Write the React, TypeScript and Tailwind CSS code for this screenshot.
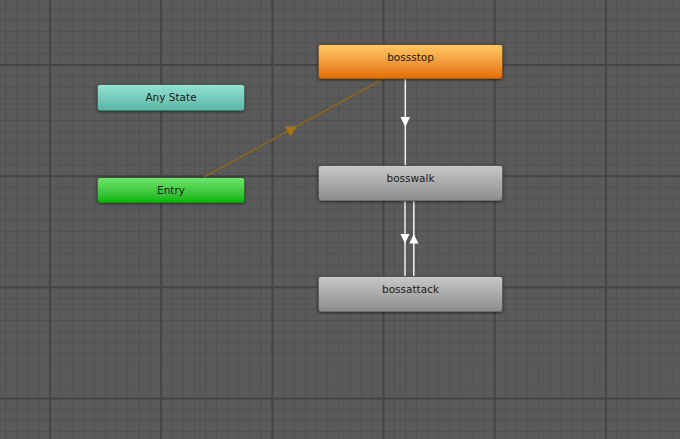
import React from "react";

type NodeProps = {
  label: string;
  left: number;
  top: number;
  width: number;
  height: number;
  cls: string;
};

function StateNode({ label, cls, pos }: { label: string; cls: string; pos: string }) {
  return (
    <div
      className={`absolute rounded-[3px] border border-[#2e2e2e]/60 shadow-[0_1px_3px_rgba(0,0,0,0.55)] ${cls} ${pos}`}
    >
      <div className="flex h-[25px] items-center justify-center text-[10.5px] text-[#202020] [font-family:'DejaVu_Sans',sans-serif]">
        {label}
      </div>
    </div>
  );
}

export default function App() {
  return (
    <div className="relative h-[439px] w-[680px] overflow-hidden bg-[#5a5a5a] bg-[linear-gradient(to_right,#454545_2px,transparent_2px),linear-gradient(to_bottom,#454545_2px,transparent_2px),linear-gradient(to_right,#515151_1px,transparent_1px),linear-gradient(to_bottom,#515151_1px,transparent_1px)] [background-size:111.2px_111.2px,111.2px_111.2px,11.12px_11.12px,11.12px_11.12px] [background-position:49px_64px,49px_64px,49.5px_64.5px,49.5px_64.5px]">
      <svg className="pointer-events-none absolute left-0 top-0" width="680" height="439">
        <line x1="204" y1="177" x2="383" y2="79" stroke="#8a6620" strokeWidth="1.5" />
        <polygon points="5.5,0 -5,-5.5 -5,5.5" fill="#a8740f" transform="translate(292 129) rotate(-28.7)" />
        <line x1="405.3" y1="79" x2="405.3" y2="166" stroke="#f2f2f2" strokeWidth="1.5" />
        <polygon points="400.5,117 410,117 405.3,127" fill="#ffffff" />
        <line x1="405" y1="201" x2="405" y2="277" stroke="#f2f2f2" strokeWidth="1.5" />
        <polygon points="400.5,234 409.5,234 405,243.5" fill="#ffffff" />
        <line x1="413.8" y1="201" x2="413.8" y2="277" stroke="#f2f2f2" strokeWidth="1.5" />
        <polygon points="409.3,243.5 418.5,243.5 413.8,234" fill="#ffffff" />
      </svg>

      <StateNode
        label="bossstop"
        pos="left-[318px] top-[44px] h-[35px] w-[185px]"
        cls="bg-linear-to-b from-[#ffc862] to-[#e56e00]"
      />
      <StateNode
        label="Any State"
        pos="left-[97px] top-[84px] h-[27px] w-[148px]"
        cls="bg-linear-to-b from-[#92e3d0] to-[#5db6a8]"
      />
      <StateNode
        label="Entry"
        pos="left-[97px] top-[177px] h-[26px] w-[148px]"
        cls="bg-linear-to-b from-[#6ae56a] to-[#00b500]"
      />
      <StateNode
        label="bosswalk"
        pos="left-[318px] top-[165px] h-[36px] w-[185px]"
        cls="bg-linear-to-b from-[#c8c8c8] to-[#8d8d8d]"
      />
      <StateNode
        label="bossattack"
        pos="left-[318px] top-[276px] h-[36px] w-[185px]"
        cls="bg-linear-to-b from-[#c8c8c8] to-[#8d8d8d]"
      />
    </div>
  );
}
